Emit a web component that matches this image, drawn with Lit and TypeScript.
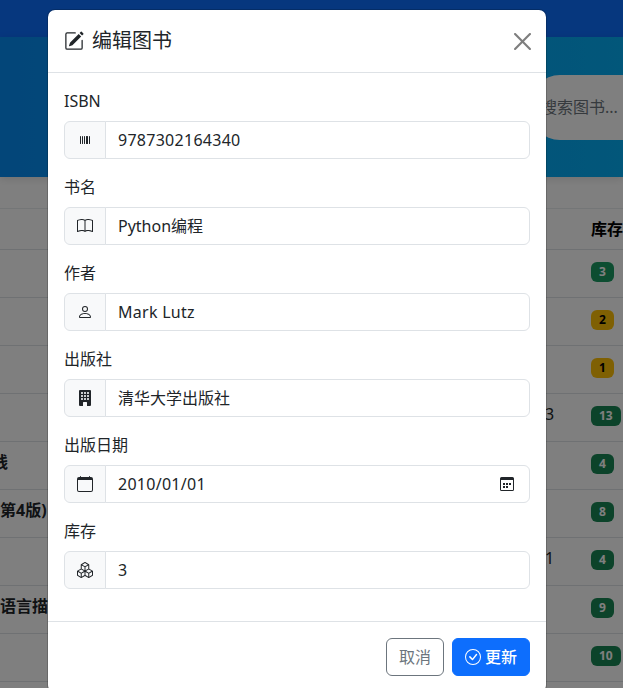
import { LitElement, html, css, svg } from "lit";
import { customElement } from "lit/decorators.js";

const icon = (paths: string[], size = 16) => html`<svg class="bi" width=${size} height=${size} viewBox="0 0 16 16" fill="currentColor">${paths.map((d) => svg`<path fill-rule="evenodd" d=${d}></path>`)}</svg>`;

const I = {
  pencil: [
    "M15.502 1.94a.5.5 0 0 1 0 .706L14.459 3.69l-2-2L13.502.646a.5.5 0 0 1 .707 0l1.293 1.293zm-1.75 2.456-2-2L4.939 9.21a.5.5 0 0 0-.121.196l-.805 2.414a.25.25 0 0 0 .316.316l2.414-.805a.5.5 0 0 0 .196-.12l6.813-6.814z",
    "M1 13.5A1.5 1.5 0 0 0 2.5 15h11a1.5 1.5 0 0 0 1.5-1.5v-6a.5.5 0 0 0-1 0v6a.5.5 0 0 1-.5.5h-11a.5.5 0 0 1-.5-.5v-11a.5.5 0 0 1 .5-.5H9a.5.5 0 0 0 0-1H2.5A1.5 1.5 0 0 0 1 2.5v11z",
  ],
  upc: ["M3 4.5a.5.5 0 0 1 1 0v7a.5.5 0 0 1-1 0v-7zm2 0a.5.5 0 0 1 1 0v7a.5.5 0 0 1-1 0v-7zm2 0a.5.5 0 0 1 1 0v7a.5.5 0 0 1-1 0v-7zm2 0a.5.5 0 0 1 .5-.5h1a.5.5 0 0 1 .5.5v7a.5.5 0 0 1-.5.5h-1a.5.5 0 0 1-.5-.5v-7zm3 0a.5.5 0 0 1 1 0v7a.5.5 0 0 1-1 0v-7z"],
  book: ["M1 2.828c.885-.37 2.154-.769 3.388-.893 1.33-.134 2.458.063 3.112.752v9.746c-.935-.53-2.12-.603-3.213-.493-1.18.12-2.37.461-3.287.811V2.828zm7.5-.141c.654-.689 1.782-.886 3.112-.752 1.234.124 2.503.523 3.388.893v9.923c-.918-.35-2.107-.692-3.287-.81-1.094-.111-2.278-.039-3.213.492V2.687zM8 1.783C7.015.936 5.587.81 4.287.94c-1.514.153-3.042.672-3.994 1.105A.5.5 0 0 0 0 2.5v11a.5.5 0 0 0 .707.455c.882-.4 2.303-.881 3.68-1.02 1.409-.142 2.59.087 3.223.877a.5.5 0 0 0 .78 0c.633-.79 1.814-1.019 3.222-.877 1.378.139 2.8.62 3.681 1.02A.5.5 0 0 0 16 13.5v-11a.5.5 0 0 0-.293-.455c-.952-.433-2.48-.952-3.994-1.105C10.413.809 8.985.936 8 1.783z"],
  person: ["M8 8a3 3 0 1 0 0-6 3 3 0 0 0 0 6zm2-3a2 2 0 1 1-4 0 2 2 0 0 1 4 0zm4 8c0 1-1 1-1 1H3s-1 0-1-1 1-4 6-4 6 3 6 4zm-1-.004c-.001-.246-.154-.986-.832-1.664C11.516 10.68 10.289 10 8 10c-2.29 0-3.516.68-4.168 1.332-.678.678-.83 1.418-.832 1.664h10z"],
  building: ["M3 0a1 1 0 0 0-1 1v14a1 1 0 0 0 1 1h3v-3.5a.5.5 0 0 1 .5-.5h3a.5.5 0 0 1 .5.5V16h3a1 1 0 0 0 1-1V1a1 1 0 0 0-1-1H3zm1.2 2v2h1.6V2H4.2zm3 0v2h1.6V2H7.2zm3 0v2h1.6V2h-1.6zm-6 3v2h1.6V5H4.2zm3 0v2h1.6V5H7.2zm3 0v2h1.6V5h-1.6zm-6 3v2h1.6V8H4.2zm3 0v2h1.6V8H7.2zm3 0v2h1.6V8h-1.6z"],
  calendar: ["M3.5 0a.5.5 0 0 1 .5.5V1h8V.5a.5.5 0 0 1 1 0V1h1a2 2 0 0 1 2 2v11a2 2 0 0 1-2 2H2a2 2 0 0 1-2-2V3a2 2 0 0 1 2-2h1V.5a.5.5 0 0 1 .5-.5zM1 4v10a1 1 0 0 0 1 1h12a1 1 0 0 0 1-1V4H1z"],
  boxes: ["M7.752.066a.5.5 0 0 1 .496 0l3.75 2.143a.5.5 0 0 1 .252.434v3.995l3.498 2A.5.5 0 0 1 16 9.07v4.286a.5.5 0 0 1-.252.434l-3.75 2.143a.5.5 0 0 1-.496 0l-3.502-2-3.502 2.001a.5.5 0 0 1-.496 0l-3.75-2.143A.5.5 0 0 1 0 13.357V9.071a.5.5 0 0 1 .252-.434L3.75 6.638V2.643a.5.5 0 0 1 .252-.434L7.752.066ZM4.25 7.504 1.508 9.071l2.742 1.567 2.742-1.567L4.25 7.504ZM7.5 9.933l-2.75 1.571v3.134l2.75-1.571V9.933Zm1 3.134 2.75 1.571v-3.134L8.5 9.933v3.134Zm.508-3.996 2.742 1.567 2.742-1.567-2.742-1.567-2.742 1.567Zm2.242-2.433V3.504L8.5 5.076V8.21l2.75-1.572ZM7.5 8.21V5.076L4.75 3.504v3.134L7.5 8.21ZM5.258 2.643 8 4.21l2.742-1.567L8 1.076 5.258 2.643ZM15 9.933l-2.75 1.571v3.134L15 13.067V9.933ZM3.75 14.638v-3.134L1 9.933v3.134l2.75 1.571Z"],
  check: [
    "M8 15A7 7 0 1 1 8 1a7 7 0 0 1 0 14zm0 1A8 8 0 1 0 8 0a8 8 0 0 0 0 16z",
    "M10.97 4.97a.235.235 0 0 0-.02.022L7.477 9.417 5.384 7.323a.75.75 0 0 0-1.06 1.06L6.97 11.03a.75.75 0 0 0 1.079-.02l3.992-4.99a.75.75 0 0 0-1.071-1.05z",
  ],
  close: ["M.293.293a1 1 0 0 1 1.414 0L8 6.586 14.293.293a1 1 0 1 1 1.414 1.414L9.414 8l6.293 6.293a1 1 0 0 1-1.414 1.414L8 9.414l-6.293 6.293a1 1 0 0 1-1.414-1.414L6.586 8 .293 1.707a1 1 0 0 1 0-1.414z"],
  picker: [
    "M2.5 1H13.5A1.5 1.5 0 0 1 15 2.5V13.5A1.5 1.5 0 0 1 13.5 15H2.5A1.5 1.5 0 0 1 1 13.5V2.5A1.5 1.5 0 0 1 2.5 1ZM2 4V13.5a.5.5 0 0 0 .5.5H13.5a.5.5 0 0 0 .5-.5V4H2Z",
    "M4 7h2v2H4zM7 7h2v2H7zM10 7h2v2h-2zM4 10h2v2H4zM7 10h2v2H7z",
  ],
};

interface Row { title: string; clipped?: boolean; mid: string; stock: number; tone: string; }
const rows: Row[] = [
  { title: "", mid: "", stock: 3, tone: "fresh" },
  { title: "", mid: "", stock: 2, tone: "low" },
  { title: "", mid: "", stock: 1, tone: "low" },
  { title: "", mid: "3", stock: 13, tone: "ok" },
  { title: "线", clipped: true, mid: "", stock: 4, tone: "ok" },
  { title: "第4版)", mid: "", stock: 8, tone: "ok" },
  { title: "", mid: "1", stock: 4, tone: "ok" },
  { title: "语言描", mid: "", stock: 9, tone: "ok" },
  { title: "", mid: "", stock: 10, tone: "ok" },
];

const fields = [
  { label: "ISBN", icon: I.upc, value: "9787302164340", wide: true },
  { label: "书名", icon: I.book, value: "Python编程" },
  { label: "作者", icon: I.person, value: "Mark Lutz", wide: true },
  { label: "出版社", icon: I.building, value: "清华大学出版社" },
  { label: "出版日期", icon: I.calendar, value: "2010/01/01", date: true, wide: true },
  { label: "库存", icon: I.boxes, value: "3" },
];

@customElement("app-root")
export class AppRoot extends LitElement {
  static styles = css`
    :host {
      display: block; position: relative; height: 688px; overflow: hidden; background: #fff; color: #212529;
      font-family: "Noto Sans", "Noto Sans CJK SC", sans-serif; font-size: 16px; line-height: 24px;
    }
    * { box-sizing: border-box; }
    .bi { display: block; flex: none; }
    .nav { height: 37px; background: #0d6efd; }
    .hero {
      position: relative; height: 140px; display: flex; align-items: center; justify-content: flex-end;
      background: linear-gradient(90deg, #078cf2, #05aef4); box-shadow: 0 2px 8px rgba(0, 0, 0, 0.12);
    }
    .search {
      width: 93px; height: 65px; background: #fff; color: #6c757d; border-radius: 30px 0 0 30px;
      display: flex; align-items: center; padding-left: 11px; white-space: nowrap; overflow: hidden;
    }
    .table { padding-top: 31px; }
    .thead { height: 42px; border-top: 1px solid #e9ecef; border-bottom: 1px solid #dee2e6; align-items: center; }
    .thead, .row { display: grid; grid-template-columns: 545px 46px auto; }
    .thead b { grid-column: 3; font-weight: 700; color: #000; }
    .row { height: 48px; padding-top: 8px; align-items: start; border-bottom: 1px solid #dee2e6; }
    .title { font-weight: 700; white-space: nowrap; }
    .title.clipped { margin-left: -8px; }
    .badge {
      justify-self: start; min-width: 23px; height: 20px; margin-top: 4px; padding: 0 8px; border-radius: 6px;
      font-size: 12px; line-height: 20px; font-weight: 700; text-align: center; white-space: nowrap;
    }
    .badge.ok { background: #198754; color: #fff; }
    .badge.fresh { background: #1a9a62; color: #fff; }
    .badge.low { background: #ffc107; color: #000; }
    .backdrop { position: absolute; inset: 0; background: rgba(0, 0, 0, 0.5); }
    .modal {
      position: absolute; left: 47px; top: 9px; width: 500px; background: #fff;
      border: 1px solid rgba(0, 0, 0, 0.175); border-radius: 8px; background-clip: padding-box;
    }
    .head {
      height: 63px; display: flex; align-items: center; justify-content: space-between; padding: 0 15px 0 16px;
      border-bottom: 1px solid #dee2e6;
    }
    .head h5 { margin: 0; display: flex; align-items: center; gap: 8px; font-size: 20px; line-height: 30px; font-weight: 400; }
    .x { all: unset; color: #000; opacity: 0.5; display: block; }
    .body { padding: 16px; }
    .field { margin-bottom: 16px; }
    label { display: block; margin-bottom: 8px; }
    .group { display: flex; height: 38px; }
    .addon {
      width: 42px; flex: none; display: flex; align-items: center; justify-content: center; background: #f8f9fa;
      border: 1px solid #dee2e6; border-radius: 6px 0 0 6px;
    }
    .control {
      flex: 1; min-width: 0; display: flex; align-items: center; margin-left: -1px; padding-right: 14px;
      border: 1px solid #dee2e6; border-radius: 0 6px 6px 0; background: #fff;
    }
    input {
      all: unset; flex: 1; min-width: 0; padding-left: 12px; font: inherit; color: #212529;
    }
    input.wide { letter-spacing: 0.27px; }
    .foot {
      padding: 16px; display: flex; justify-content: flex-end; gap: 8px; border-top: 1px solid #dee2e6;
    }
    button.btn {
      all: unset; box-sizing: border-box; height: 38px; padding: 0 12px; display: flex; align-items: center; gap: 4px;
      border-radius: 6px; border: 1px solid;
    }
    button.btn.cancel { color: #6c757d; border-color: #6c757d; }
    button.btn.save { color: #fff; background: #0d6efd; border-color: #0d6efd; font-weight: 500; }
  `;

  render() {
    return html`
      <div class="nav"></div>
      <div class="hero"><div class="search">搜索图书...</div></div>
      <div class="table">
        <div class="thead"><span></span><span></span><b>库存</b></div>
        ${rows.map((r) => html`<div class="row">
          <span class="title ${r.clipped ? "clipped" : ""}">${r.title}</span>
          <span>${r.mid}</span>
          <span class="badge ${r.tone}">${r.stock}</span>
        </div>`)}
      </div>
      <div class="backdrop"></div>
      <div class="modal">
        <div class="head">
          <h5>${icon(I.pencil, 20)}编辑图书</h5>
          <button class="x" aria-label="关闭">${icon(I.close, 17)}</button>
        </div>
        <div class="body">
          ${fields.map((f) => html`<div class="field">
            <label>${f.label}</label>
            <div class="group">
              <span class="addon">${icon(f.icon)}</span>
              <div class="control">
                <input class=${f.wide ? "wide" : ""} .value=${f.value} />
                ${f.date ? icon(I.picker) : ""}
              </div>
            </div>
          </div>`)}
        </div>
        <div class="foot">
          <button class="btn cancel">取消</button>
          <button class="btn save">${icon(I.check)}更新</button>
        </div>
      </div>
    `;
  }
}
